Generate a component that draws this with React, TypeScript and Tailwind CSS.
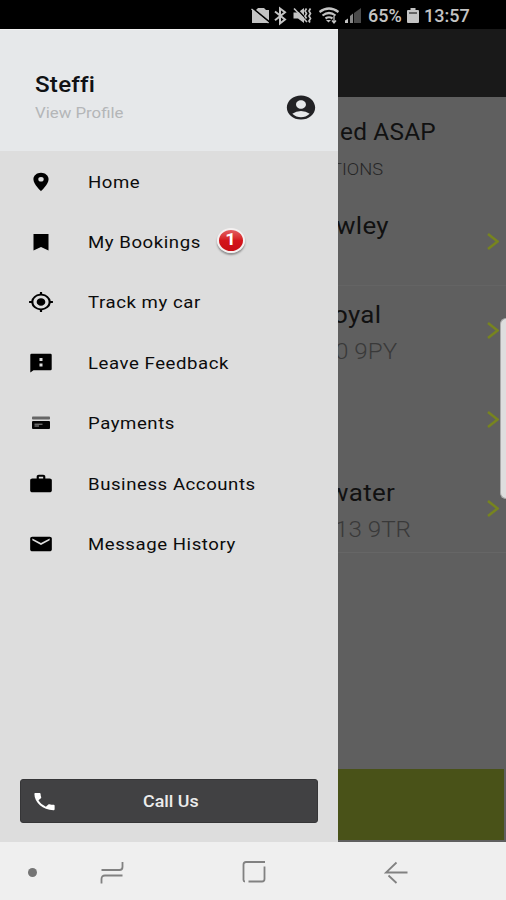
import type { IconType } from 'react-icons'
import { MdAccountCircle, MdEmail, MdLocationOn, MdMyLocation, MdPhone, MdWork } from 'react-icons/md'

interface MenuItem {
  icon: IconType | typeof CardIcon
  label: string
  badge?: number
}

const menuItems: MenuItem[] = [
  { icon: MdLocationOn, label: 'Home' },
  { icon: BookmarkIcon, label: 'My Bookings', badge: 1 },
  { icon: MdMyLocation, label: 'Track my car' },
  { icon: FeedbackIcon, label: 'Leave Feedback' },
  { icon: CardIcon, label: 'Payments' },
  { icon: MdWork, label: 'Business Accounts' },
  { icon: MdEmail, label: 'Message History' },
]

const trips = [
  { title: 'wley', sub: '', indent: '-ml-[2px]', subIndent: '', border: 'border-[#646464]' },
  { title: 'oyal', sub: '0 9PY', indent: '-ml-[5px]', subIndent: '-ml-[3px]', border: 'border-transparent' },
  { title: '', sub: '', indent: '', subIndent: '', border: 'border-transparent' },
  { title: 'water', sub: '13 9TR', indent: '-ml-[9px]', subIndent: '-ml-[3px]', border: 'border-[#666]' },
]

interface IconProps {
  className?: string
  preserveAspectRatio?: string
}

function BookmarkIcon({ className }: IconProps) {
  return (
    <svg viewBox="0 0 25 22" className={className}>
      <path d="M5 3h15v16.500l-7.500-3.500L5 19.500z" fill="currentColor" />
    </svg>
  )
}

function FeedbackIcon({ className }: IconProps) {
  return (
    <svg viewBox="0 0 25 22" className={className}>
      <path d="M3 1.800h19q1.200 0 1.200 1.200v14q0 1.200-1.200 1.200H5L1.800 20.500V3Q1.800 1.800 3 1.800z" fill="currentColor" />
      <path d="M11 6h3v3h-3zM11 11.500h3v3h-3z" fill="#ddd" />
    </svg>
  )
}

function CardIcon({ className }: IconProps) {
  return (
    <svg viewBox="0 0 25 22" className={className}>
      <rect x="3.500" y="4.500" width="18" height="3" rx="0.800" fill="#666" />
      <rect x="3.500" y="9" width="18" height="8" rx="1" fill="#050505" />
      <path d="M6 12.200h8M6 14h4.500" stroke="#aaa" strokeWidth="0.900" />
    </svg>
  )
}

function StatusBar() {
  return (
    <header className="flex h-[29px] shrink-0 items-center bg-black pt-[3px] pl-[251px] text-[#c4c4c4]">
      <svg width="114" height="20" viewBox="251 6 114 20" fill="none" stroke="currentColor">
        {/* briefcase, crossed out */}
        <path d="M252 10h4l2-2h6l2 2h3v13h-17z" fill="currentColor" stroke="none" />
        <path d="M253 8.500l17 14" stroke="#000" strokeWidth="1.800" />
        <path d="M251.500 9l17 14" strokeWidth="1.300" />
        {/* bluetooth */}
        <path d="M275 11.500l10 8-5 4v-15l5 3.800-10 8" strokeWidth="2" />
        {/* muted with vibration */}
        <path d="M293.500 12.500h4.500l6-4.500v15l-6-4.500h-4.500z" fill="currentColor" stroke="none" />
        <path d="M296 8l12 13" stroke="#000" strokeWidth="1.500" />
        <path d="M294 8.500l13 13.500" strokeWidth="1.600" />
        <path d="M306.500 8.500l-1.500 2.500 1.500 2.500-1.500 2.500 1.500 2.500M310.500 8.500l-1.500 2.500 1.500 2.500-1.500 2.500 1.500 2.500-1.500 2.500 1 1.500" strokeWidth="1.700" />
        {/* wifi */}
        <path d="M319.500 12q9.500-7 19 0M322.500 15.500q6.500-5 13 0M325.500 18.500q3.500-2.500 7 0" strokeWidth="2.200" />
        <path d="M326 20h5l-2.500 2.500z" fill="currentColor" stroke="none" />
        <path d="M334 16v7m-2-2.500l2 2.500 2-2.500" strokeWidth="1.300" />
        {/* signal */}
        <path d="M345 23v-2.500l3-2v4.500z" fill="currentColor" stroke="none" />
        <path d="M350 23v-7l3-2.500v9.500z" fill="#888" stroke="none" />
        <path d="M354 23V13l7-5v15z" fill="#4a4a4a" stroke="none" />
      </svg>
      <span className="ml-[3px] w-[36px] text-[18px] leading-none font-medium">65%</span>
      <svg width="12" height="16" viewBox="0 0 12 16" className="mr-[5px] ml-[3px]">
        <path d="M3.500 0h5v2H11q1 0 1 1v11q0 1-1 1H1q-1 0-1-1V3q0-1 1-1h2.500z" fill="currentColor" />
        <path d="M2 5h8" stroke="#444" strokeWidth="1.500" />
      </svg>
      <span className="text-[18px] leading-none font-medium">13:57</span>
    </header>
  )
}

function Badge({ count }: { count: number }) {
  return (
    <span className="ml-[28px] flex h-[25px] w-[28px] -translate-y-[2px] items-center justify-center rounded-[50%] border-[2.5px] border-[#f4f0f0] bg-linear-to-b from-[#e35a5e] via-[#d4141b] to-[#c80d14] text-[16px] leading-none font-bold text-white shadow-[0_2px_2px_rgba(0,0,0,0.35)]">
      <span className="scale-x-[1.15]">{count}</span>
    </span>
  )
}

function Drawer() {
  return (
    <aside className="z-10 flex w-[338px] shrink-0 flex-col bg-[#dddddd] text-[#0c0c0c]">
      {/* Profile */}
      <div className="flex h-[122px] justify-between border-t border-[#f2f2f2] bg-[#e6e8ea] pr-[20px] pl-[35px]">
        <div className="pt-[41px]">
          <div className="origin-left scale-x-[1.1] text-[22px] leading-[27px] font-medium tracking-[0.2px] text-[#101114]">Steffi</div>
          <div className="mt-[5px] origin-left scale-x-[1.12] text-[15px] leading-[20px] whitespace-nowrap text-[#b4b6b8]">
            View Profile
          </div>
        </div>
        <MdAccountCircle preserveAspectRatio="none" className="mt-[63px] h-[29px] w-[34px] text-[#222225]" />
      </div>

      {/* Menu */}
      <nav className="flex flex-1 flex-col pt-[0.5px]">
        {menuItems.map(({ icon: Icon, label, badge }) => (
          <div key={label} className="flex h-[60.4px] items-center pl-[28px]">
            <Icon preserveAspectRatio="none" className="h-[22px] w-[26px] shrink-0 text-black" />
            <span className="ml-[34px] origin-left scale-x-[1.12] pt-[2px] text-[16.6px] leading-[22px] whitespace-nowrap tracking-[0.5px]">
              {label}
            </span>
            {badge && <Badge count={badge} />}
          </div>
        ))}
      </nav>

      <div className="px-[20px] pb-[19px]">
        <button className="flex h-[44px] w-[298px] items-center rounded-[3px] border border-[#353537] bg-[#414143] pl-[10px] text-[#ececec]">
          <MdPhone preserveAspectRatio="none" className="h-[23px] w-[27px] text-white" />
          <span className="ml-[85px] origin-left scale-x-[1.05] text-[17px] leading-none font-medium">Call Us</span>
        </button>
      </div>
    </aside>
  )
}

function Backdrop() {
  return (
    <main className="flex w-[168px] flex-col bg-[#5f5f5f] text-[#111]">
      <div className="h-[68px] shrink-0 bg-[#191919]" />
      <div className="h-[100px] shrink-0 whitespace-nowrap">
        <div className="ml-[2px] origin-left scale-x-[1.06] pt-[22px] text-[23px] leading-[28px] tracking-[0.2px]">ed ASAP</div>
        <div className="-ml-[7px] origin-left scale-x-[1.11] pt-[11px] text-[16.5px] leading-[24px] font-light text-[#262626]">TIONS</div>
      </div>
      {trips.map((trip, i) => (
        <div key={i} className={`flex h-[89px] shrink-0 justify-between border-b pr-[7px] ${trip.border}`}>
          <div className="pt-[14px] whitespace-nowrap">
            <div className={`h-[30px] origin-left scale-x-[1.08] text-[24px] leading-[30px] tracking-[0.3px] ${trip.indent}`}>
              {trip.title}
            </div>
            <div className={`mt-[7px] origin-left scale-x-[1.1] text-[22px] leading-[30px] font-light text-[#393939] ${trip.subIndent}`}>
              {trip.sub}
            </div>
          </div>
          <svg width="12" height="17" viewBox="0 0 12 17" fill="none" stroke="#77841f" strokeWidth="2.500" className="mt-[36px]">
            <path d="M1 1l9.500 7.500L1 16" />
          </svg>
        </div>
      ))}
      <div className="mt-auto mr-[2px] mb-[2px] h-[71px] shrink-0 bg-[#495218]" />
    </main>
  )
}

function NavBar() {
  return (
    <footer className="flex h-[58px] shrink-0 items-center bg-[#efefef] pl-[28px] text-[#818181]">
      <span className="mt-[2px] h-[9px] w-[9px] rounded-full bg-[#747474]" />
      <svg width="24" height="24" viewBox="0 0 24 24" fill="none" stroke="currentColor" strokeWidth="1.800" className="mt-[3px] ml-[63px]">
        <path d="M1.500 9h18q3 0 3-3V1M22.500 14.500H5q-3.500 0-3.500 3.500v4.500" />
      </svg>
      <svg width="24" height="24" viewBox="0 0 24 24" fill="none" stroke="currentColor" strokeWidth="1.800" className="mt-[2px] ml-[118px]">
        <path d="M23 2H4Q1.500 2 1.500 4.500V20q0 1.500 1.500 1.500M6.500 21.500H20q2.500 0 2.500-2.500V6.500" />
      </svg>
      <svg width="24" height="24" viewBox="0 0 24 24" fill="none" stroke="currentColor" strokeWidth="1.800" className="mt-[3px] ml-[118px]">
        <path d="M12.500 1.500L2 11.500h21.500M4.500 14.500l8 7.500" />
      </svg>
    </footer>
  )
}

export default function App() {
  return (
    <div className="relative flex h-[900px] w-[506px] flex-col overflow-hidden font-[Roboto,sans-serif]">
      <StatusBar />
      <div className="flex min-h-0 flex-1">
        <Drawer />
        <Backdrop />
      </div>
      <NavBar />
      {/* Edge panel handle */}
      <div className="absolute top-[318px] right-0 h-[181px] w-[6px] rounded-l-[6px] border border-r-0 border-[#aaa] bg-[#dedede]" />
    </div>
  )
}
